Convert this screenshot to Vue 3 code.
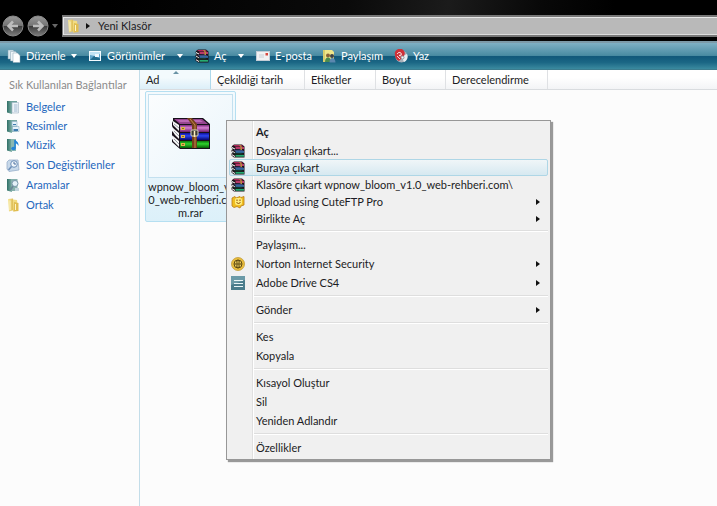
<script setup>
const commands = [
  { id: 'organize', label: 'Düzenle', menu: true },
  { id: 'views', label: 'Görünümler', menu: true },
  { id: 'rar', label: 'Aç', menu: true },
  { id: 'mail', label: 'E-posta' },
  { id: 'share', label: 'Paylaşım' },
  { id: 'burn', label: 'Yaz' },
]
const links = [
  { id: 'docs', label: 'Belgeler' },
  { id: 'pictures', label: 'Resimler' },
  { id: 'music', label: 'Müzik' },
  { id: 'recent', label: 'Son Değiştirilenler' },
  { id: 'searches', label: 'Aramalar' },
  { id: 'folder', label: 'Ortak' },
]
const columns = [
  { id: 'name', label: 'Ad', sorted: true },
  { id: 'date', label: 'Çekildiği tarih' },
  { id: 'tags', label: 'Etiketler' },
  { id: 'size', label: 'Boyut' },
  { id: 'rating', label: 'Derecelendirme' },
]
const groups = [
  {
    compact: true,
    items: [
      { label: 'Aç', strong: true },
      { label: 'Dosyaları çıkart...', icon: 'rar' },
      { label: 'Buraya çıkart', icon: 'rar', active: true },
      { label: 'Klasöre çıkart wpnow_bloom_v1.0_web-rehberi.com\\', icon: 'rar' },
      { label: 'Upload using CuteFTP Pro', icon: 'ftp', sub: true },
      { label: 'Birlikte Aç', sub: true },
    ],
  },
  {
    items: [
      { label: 'Paylaşım...' },
      { label: 'Norton Internet Security', icon: 'norton', sub: true },
      { label: 'Adobe Drive CS4', icon: 'drive', sub: true },
    ],
  },
  { items: [{ label: 'Gönder', sub: true }] },
  { items: [{ label: 'Kes' }, { label: 'Kopyala' }] },
  { items: [{ label: 'Kısayol Oluştur' }, { label: 'Sil' }, { label: 'Yeniden Adlandır' }] },
  { items: [{ label: 'Özellikler' }] },
]
</script>

<template>
  <svg class="defs" aria-hidden="true">
    <defs>
      <linearGradient id="g-glass" x1="0" y1="0" x2="0" y2="1">
        <stop offset="0" stop-color="#999" /><stop offset=".48" stop-color="#747474" />
        <stop offset=".52" stop-color="#3c3c3c" /><stop offset="1" stop-color="#808080" />
      </linearGradient>
      <linearGradient id="g-purple" x1="0" y1="0" x2="0" y2="1">
        <stop offset="0" stop-color="#7c2a7c" /><stop offset=".4" stop-color="#d77fd0" /><stop offset="1" stop-color="#6b1c6c" />
      </linearGradient>
      <linearGradient id="g-blue" x1="0" y1="0" x2="0" y2="1">
        <stop offset="0" stop-color="#10109a" /><stop offset=".4" stop-color="#2b45f0" /><stop offset="1" stop-color="#06066c" />
      </linearGradient>
      <linearGradient id="g-green" x1="0" y1="0" x2="0" y2="1">
        <stop offset="0" stop-color="#0c750c" /><stop offset=".4" stop-color="#2fd22c" /><stop offset="1" stop-color="#075c07" />
      </linearGradient>
      <linearGradient id="g-folder" x1="0" y1="0" x2="1" y2="0">
        <stop offset="0" stop-color="#f7e79a" /><stop offset="1" stop-color="#d9b548" />
      </linearGradient>
      <linearGradient id="g-book" x1="0" y1="0" x2="1" y2="0">
        <stop offset="0" stop-color="#2f6f66" /><stop offset="1" stop-color="#7fb0a8" />
      </linearGradient>
    </defs>

    <symbol id="i-rar" viewBox="0 0 14 14">
      <path d="M1 2 3 .5H11L13.500 2.500V13.500H3L.5 11.500V9.500L2 9 .5 7.500V6L2 5 .5 4Z" fill="#1c1218" />
      <path d="M2 1.500 3.500 1H10.500L12.500 2.500H4.500Z" fill="#b02a5c" />
      <path d="M4.500 3.200H13V4.800H4.500Z" fill="#e0447e" />
      <path d="M1 3 4 4.500V5.500L1 4ZM1 6.500 4 8.500V9.300L1 7.500ZM1 10.300 4 12V13L1 11.300Z" fill="#fff" />
      <path d="M2 6 10 5.800 13 6.500H4.500Z" fill="#5f7fe0" />
      <path d="M4.500 7.200H13V8.700H4.500Z" fill="#3a7fc0" />
      <path d="M2 9.800 10 9.600 13 10.300H4.500Z" fill="#0d6a46" />
      <path d="M4.500 11H13V12.700H4.500Z" fill="#26ab72" />
      <path d="M8 1H9.500L11 3V6H9.500V3Z" fill="#b98a3c" />
    </symbol>

    <symbol id="i-archive" viewBox="0 0 38 31">
      <path d="M1 0H31L38 6V31H8L0 24V22L2 20 0 17V14L2 12 0 8V5L1 3Z" fill="#17101a" />
      <path d="M2 1H30L36 6H8Z" fill="#96458f" />
      <path d="M5 2H28L31 4H8Z" fill="#bd68b5" />
      <path d="M1 3 7 7V13L3 9 1 7Z" fill="#f4f4f4" />
      <path d="M1 10 7 15V21L3 17 1 14Z" fill="#f4f4f4" />
      <path d="M1 18 7 23V29L1 23Z" fill="#f4f4f4" />
      <path d="M2 6 7 10M2 13 7 18M2 21 7 26" stroke="#9aa0a8" fill="none" />
      <path d="M8 7H37V14H8Z" fill="url(#g-purple)" />
      <path d="M8 15H37V22H8Z" fill="url(#g-blue)" />
      <path d="M8 23H37V30H8Z" fill="url(#g-green)" />
      <path d="M9 9h4v3H9ZM9 17h4v3H9ZM9 25h4v3H9Z" fill="#e0b64c" />
      <path d="M10 10h2v1h-2ZM10 18h2v1h-2ZM10 26h2v1h-2Z" fill="#8a6a28" />
      <path d="M15 0H20L25 6V30H20V7Z" fill="#75401b" />
      <path d="M18 1 23 7V30" stroke="#c68a4b" fill="none" />
      <rect x="19" y="12" width="7" height="6" rx="1" fill="#3c3a32" stroke="#d9d7c4" />
      <path d="M22.500 13V19" stroke="#fff0c0" stroke-width="1.500" />
    </symbol>

    <symbol id="i-organize" viewBox="0 0 14 14">
      <path d="M1 1H6L8 3V10H1Z" fill="#dce9ef" stroke="#7fa0b2" stroke-width=".5" />
      <path d="M3.500 2.500H8.500L10.500 4.500V12H3.500Z" fill="#edf4f7" stroke="#86a2b2" stroke-width=".5" />
      <path d="M6 4H10.500L13 6.500V13.500H6Z" fill="#fff" stroke="#86a2b2" stroke-width=".5" />
    </symbol>
    <symbol id="i-views" viewBox="0 0 14 14">
      <rect x="1.500" y="2.500" width="11" height="9" fill="#5fa4cb" stroke="#f4fbff" />
      <path d="M2 3H12V5L7 7 2 6Z" fill="#bfe2f4" /><path d="M2 11 6 7 12 9.500V11Z" fill="#1f6a8c" />
      <path d="M7 5H11V8H7Z" fill="#eef8ff" />
    </symbol>
    <symbol id="i-mail" viewBox="0 0 14 14">
      <rect x=".5" y="2.500" width="13" height="9" fill="#f1f1f3" stroke="#c4cdd6" />
      <path d="M3 6H8M3 8H8" stroke="#c9ced5" /><path d="M9.500 4H12V6.500H9.500Z" fill="#d8463c" />
    </symbol>
    <symbol id="i-share" viewBox="0 0 14 14">
      <path d="M1 1H10L12 3V13H1Z" fill="#f0e68a" /><path d="M1 1H3V13H1Z" fill="#d9ce6c" />
      <circle cx="6" cy="6.500" r="2" fill="#8a6238" /><path d="M3 13Q3 8.500 6 8.500T9 13Z" fill="#4b8b4e" />
      <circle cx="10" cy="7" r="2" fill="#3c4147" /><path d="M7.500 13.500Q7.500 9 10.300 9T13.500 13.500Z" fill="#5b87ae" />
    </symbol>
    <symbol id="i-burn" viewBox="0 0 14 14">
      <circle cx="7.500" cy="7.500" r="6" fill="#a9b0b9" /><path d="M7.500 7.500 13 5A6 6 0 0 1 10 13Z" fill="#e8edf0" />
      <path d="M1 6A5 5 0 0 1 10 2Q12 5 9 8L5 12Q1 10 1 6Z" fill="#cf3139" />
      <path d="M3 5Q5 2 7 4T5 6.500Q8 6 8 9M3 7 6 10" fill="none" stroke="#f6dede" />
      <circle cx="8.500" cy="8.500" r="1.500" fill="#f7f7f7" stroke="#88909a" />
    </symbol>

    <symbol id="i-docs" viewBox="0 0 14 14">
      <path d="M1 1H5L6 2V14L1 12.500Z" fill="url(#g-book)" /><path d="M5 1H11V13H5Z" fill="#6fa39c" />
      <path d="M6 2.500H12.500V13H6Z" fill="#eef4f8" stroke="#9fb4c4" stroke-width=".6" />
      <path d="M8 5H11.500M8 7H11.500M8 9H11.500M8 11H11.500" stroke="#8fabc6" stroke-width=".8" />
    </symbol>
    <symbol id="i-pictures" viewBox="0 0 14 14">
      <path d="M1 1H5L6 2V14L1 12.500Z" fill="url(#g-book)" /><path d="M5 1H11V13H5Z" fill="#78aaa3" />
      <path d="M6 2.500H11V7H6ZM6.500 7.500H13V12.500H6.500Z" fill="#e6f2fa" stroke="#8fb2c6" stroke-width=".6" />
      <path d="M7 5H10V6H7ZM7.500 10H12V12H7.500Z" fill="#3d7cae" />
    </symbol>
    <symbol id="i-music" viewBox="0 0 14 14">
      <path d="M1 1H5L6 2V14L1 12.500Z" fill="url(#g-book)" /><path d="M5 1H10V13H5Z" fill="#8ab7b1" />
      <path d="M9 2V10" stroke="#2584d6" stroke-width="1.600" /><path d="M9 2Q13 4 12.500 8Q11.500 5.500 9 5Z" fill="#2584d6" />
      <ellipse cx="7.500" cy="10.500" rx="2.300" ry="1.800" fill="#2584d6" />
    </symbol>
    <symbol id="i-recent" viewBox="0 0 14 14">
      <path d="M3 2H12L13 12 3 13.500 1 11V4Z" fill="#c8d9ea" stroke="#8fa8c4" stroke-width=".7" />
      <circle cx="8" cy="6" r="3.300" fill="#f0f6fb" stroke="#6d8fb8" /><path d="M8 4V6H10" fill="none" stroke="#4a6f9e" />
      <path d="M5.500 8.500 2.500 12" stroke="#6d8fb8" stroke-width="1.600" />
    </symbol>
    <symbol id="i-searches" viewBox="0 0 14 14">
      <path d="M1 1H5L6 2V14L1 12.500Z" fill="url(#g-book)" /><path d="M5 1H11.500V13H5Z" fill="#86b0ac" />
      <circle cx="9" cy="5.500" r="3" fill="#e4f1f8" stroke="#7897aa" /><path d="M7 8 4.500 12" stroke="#6a8797" stroke-width="1.800" />
      <path d="M9 10H13V13H9Z" fill="#c2d5de" />
    </symbol>
    <symbol id="i-folder" viewBox="0 0 14 14">
      <path d="M2 1 7 .5 8 12 3 13.500Z" fill="url(#g-folder)" />
      <path d="M7 1.500 11 2 12 12.500 7 13.500Z" fill="#f3dd83" /><path d="M8 4 12.500 5V13L7.500 13.500Z" fill="#e0bd52" />
      <path d="M4 2.500V12M9.500 6V12" stroke="#fdf5c8" />
    </symbol>

    <symbol id="i-ftp" viewBox="0 0 14 14">
      <path d="M1 3 4 1.500 5 3 9 1.500 10 2.500 13 1.500V10L10 11 9 13 6 11.500 3 12.500 1 11Z" fill="#f0bd20" stroke="#b87a14" stroke-width=".8" />
      <rect x="4" y="3" width="7" height="7" rx="2" fill="#ffec7c" />
      <path d="M6 4.500V6M9 4.500V6M5.500 7.500Q7.500 9.500 9.500 7.500" fill="none" stroke="#8a4b08" />
    </symbol>
    <symbol id="i-norton" viewBox="0 0 14 14">
      <circle cx="7" cy="7" r="6.500" fill="#e9bd3c" stroke="#c29a35" stroke-width=".8" />
      <circle cx="7" cy="7" r="4" fill="#ffdf68" stroke="#5e4a12" />
      <path d="M3 7H11M7 3V11" stroke="#5e4a12" /><ellipse cx="7" cy="7" rx="1.900" ry="4" fill="none" stroke="#5e4a12" stroke-width=".7" />
    </symbol>
    <symbol id="i-drive" viewBox="0 0 14 14">
      <path d="M0 0H14V14H0Z" fill="#4b7d8c" /><path d="M0 0H14V4L0 9Z" fill="#6b9aa7" />
      <path d="M3 4.500H12M3 7.500H12M3 10.500H12" stroke="#e9f5f7" />
    </symbol>
  </svg>

  <div class="window">
    <header class="chrome">
      <nav class="history" aria-label="Gezinti">
        <button type="button" class="round" aria-label="Geri">
          <svg viewBox="0 0 22 22"><circle cx="11" cy="11" r="10" fill="url(#g-glass)" stroke="#8a8a8a" /><path d="M16 11H7M11 6.500 6.500 11 11 15.500" fill="none" stroke="#bdbdbd" stroke-width="2.500" /></svg>
        </button>
        <button type="button" class="round" aria-label="İleri">
          <svg viewBox="0 0 22 22"><circle cx="11" cy="11" r="10" fill="url(#g-glass)" stroke="#8a8a8a" /><path d="M6 11H15M11 6.500 15.500 11 11 15.500" fill="none" stroke="#bdbdbd" stroke-width="2.500" /></svg>
        </button>
        <button type="button" class="recent" aria-label="Son sayfalar"><span class="down"></span></button>
      </nav>
      <div class="address">
        <svg class="icon"><use href="#i-folder" /></svg>
        <span class="right"></span>
        <a href="#" class="crumb">Yeni Klasör</a>
      </div>
    </header>

    <div class="toolbar" role="toolbar">
      <button v-for="c in commands" :key="c.id" type="button" class="command" :class="c.id">
        <svg class="icon"><use :href="'#i-' + c.id" /></svg>
        <span class="caption">{{ c.label }}</span>
        <span v-if="c.menu" class="down"></span>
      </button>
    </div>

    <div class="body">
      <aside class="side">
        <h2>Sık Kullanılan Bağlantılar</h2>
        <ul>
          <li v-for="l in links" :key="l.id">
            <a href="#"><svg class="icon"><use :href="'#i-' + l.id" /></svg>{{ l.label }}</a>
          </li>
        </ul>
      </aside>

      <main class="files">
        <div class="columns">
          <button v-for="c in columns" :key="c.id" type="button" class="column" :class="[c.id, { sorted: c.sorted }]">{{ c.label }}</button>
        </div>
        <div class="canvas">
          <figure class="file">
            <div class="thumb"><svg class="archive"><use href="#i-archive" /></svg></div>
            <figcaption>wpnow_bloom_v1.<br>0_web-rehberi.co<br>m.rar</figcaption>
          </figure>
        </div>
      </main>
    </div>

    <div class="menu" role="menu">
      <div v-for="(g, i) in groups" :key="i" class="group" :class="{ compact: g.compact }" role="group">
        <button v-for="m in g.items" :key="m.label" type="button" role="menuitem" class="item" :class="{ strong: m.strong, active: m.active }">
          <span class="slot"><svg v-if="m.icon" class="icon"><use :href="'#i-' + m.icon" /></svg></span>
          <span class="text">{{ m.label }}</span>
          <span v-if="m.sub" class="right"></span>
        </button>
      </div>
    </div>
  </div>
</template>

<style>
body {
  background: #fcfcfc;
}
</style>

<style scoped>
.defs {
  position: absolute;
  width: 0;
  height: 0;
}
.window {
  position: relative;
  display: flex;
  flex-direction: column;
  min-height: 100vh;
  overflow: hidden;
  font: 11px/16px Lato, "Open Sans", sans-serif;
  color: #1c1c24;
}
button {
  margin: 0;
  padding: 0;
  border: 0;
  background: none;
  font: inherit;
  color: inherit;
  text-align: left;
}
a {
  color: inherit;
  text-decoration: none;
}
.icon {
  flex: none;
  width: 14px;
  height: 14px;
}
.down {
  border: 3px solid transparent;
  border-top: 4px solid;
  border-bottom: 0;
}
.right {
  border: 3px solid transparent;
  border-left: 4px solid #111;
  border-right: 0;
}
.chrome {
  display: flex;
  align-items: flex-end;
  height: 41px;
  box-sizing: border-box;
  padding-bottom: 4px;
  background: linear-gradient(100deg, #000 15%, #0a0a0a 48%, #1b1b1b 62%, #080808 75%, #000 85%);
}
.history {
  display: flex;
  align-items: center;
  gap: 3px;
  width: 62px;
  padding-left: 2px;
  box-sizing: border-box;
}
.round {
  flex: none;
  width: 22px;
  height: 22px;
}
.round svg {
  display: block;
  width: 22px;
  height: 22px;
}
.recent {
  display: flex;
  color: #686868;
}
.address {
  display: flex;
  flex: 1;
  align-items: center;
  height: 22px;
  box-sizing: border-box;
  padding-left: 3px;
  border: solid #777;
  border-width: 2px 0 2px 1px;
  box-shadow: inset 1px 1px #e8e8e8, inset 0 -1px #ddd;
  background: #b9b9b9;
}
.address .right {
  margin: 0 8px 0 6px;
}
.toolbar {
  display: flex;
  align-items: center;
  height: 29px;
  box-sizing: border-box;
  padding-left: 7px;
  border-top: 2px solid #7d9aa8;
  border-bottom: 1px solid #3c7c8e;
  background: linear-gradient(#7fb0c4, #498ba2 48%, #11587a 52%, #1b6785 75%, #3b8a9f);
  color: #fff;
}
.command {
  display: flex;
  align-items: center;
  gap: 5px;
  box-sizing: border-box;
}
.caption {
  flex: 1;
}
.organize { width: 81px; padding-right: 11px; }
.views { width: 107px; padding-right: 12px; }
.rar { width: 61px; padding-right: 12px; }
.mail { width: 66px; }
.share { width: 72px; }
.body {
  display: flex;
  flex: 1;
}
.side {
  width: 139px;
  border-right: 1px solid #c3dde9;
}
.side h2 {
  margin: 0;
  padding: 7px 0 4px 9px;
  font-size: 11px;
  font-weight: 400;
  white-space: nowrap;
  color: #8b8b8b;
}
.side ul {
  display: grid;
  gap: 1px;
  margin: 0;
  padding: 0 0 0 6px;
  list-style: none;
}
.side a {
  display: flex;
  align-items: center;
  gap: 6px;
  height: 18px;
  padding-top: 1px;
  color: #2467bd;
  white-space: nowrap;
  box-sizing: content-box;
}
.side li {
  height: 18px;
}
.side li:nth-child(n + 4) {
  padding-top: 1px;
}
.files {
  flex: 1;
}
.columns {
  display: flex;
  height: 20px;
  box-sizing: border-box;
  border-bottom: 1px solid #d9dcdf;
  background: linear-gradient(#fff 40%, #f3f4f6);
}
.column {
  box-sizing: border-box;
  padding-left: 6px;
  border-right: 1px solid #dfe1e4;
  white-space: nowrap;
}
.column.name { width: 71px; }
.column.date { width: 94px; }
.column.tags { width: 71px; }
.column.size { width: 70px; }
.column.rating { width: 102px; }
.sorted {
  position: relative;
  border-color: #aed9ec;
  background: linear-gradient(#f3fafd 40%, #dceff8);
}
.sorted::after {
  content: "";
  position: absolute;
  top: 1px;
  left: 33px;
  border: 3px solid transparent;
  border-top: 0;
  border-bottom-color: #6a93a6;
}
.canvas {
  padding: 1px 5px;
}
.file {
  width: 91px;
  margin: 0;
  box-sizing: border-box;
  padding: 2px 2px 0;
  border: 1px solid #b5dff1;
  border-radius: 2px;
  background: linear-gradient(#f4fafd, #dcf0f9);
}
.thumb {
  display: grid;
  place-items: center;
  height: 84px;
  box-sizing: border-box;
  padding-bottom: 6px;
  border: 1px solid #c3e0ef;
  background: linear-gradient(135deg, #fbfdfe, #eaf5fb);
}
.archive {
  width: 38px;
  height: 31px;
}
figcaption {
  padding: 2px 0;
  line-height: 13px;
  text-align: center;
  white-space: nowrap;
}
.menu {
  position: absolute;
  top: 120px;
  left: 226px;
  width: 325px;
  box-sizing: border-box;
  padding: 1px 2px 2px;
  border: 1px solid #979797;
  background: linear-gradient(90deg, #f0f0f0 25px, #e0e0e0 25px, #e0e0e0 26px, #fff 26px, #fff 27px, #f0f0f0 27px);
  box-shadow: 2px 2px 1px #999;
}
.group + .group::before {
  content: "";
  display: block;
  margin: 3px 0 3px 25px;
  border-top: 1px solid #dedede;
  border-bottom: 1px solid #fff;
}
.item {
  display: flex;
  align-items: center;
  width: 100%;
  height: 19px;
  box-sizing: border-box;
  padding-right: 7px;
  border: 1px solid transparent;
  border-radius: 2px;
  white-space: nowrap;
}
.compact .item {
  height: 17px;
}
.compact .strong {
  height: 20px;
  font-weight: 700;
}
.slot {
  display: flex;
  width: 26px;
  padding-left: 1px;
  box-sizing: border-box;
}
.text {
  flex: 1;
}
.active {
  border-color: #aed6e6;
  background: linear-gradient(rgba(240, 247, 250, .8), rgba(208, 231, 241, .8));
}
</style>
